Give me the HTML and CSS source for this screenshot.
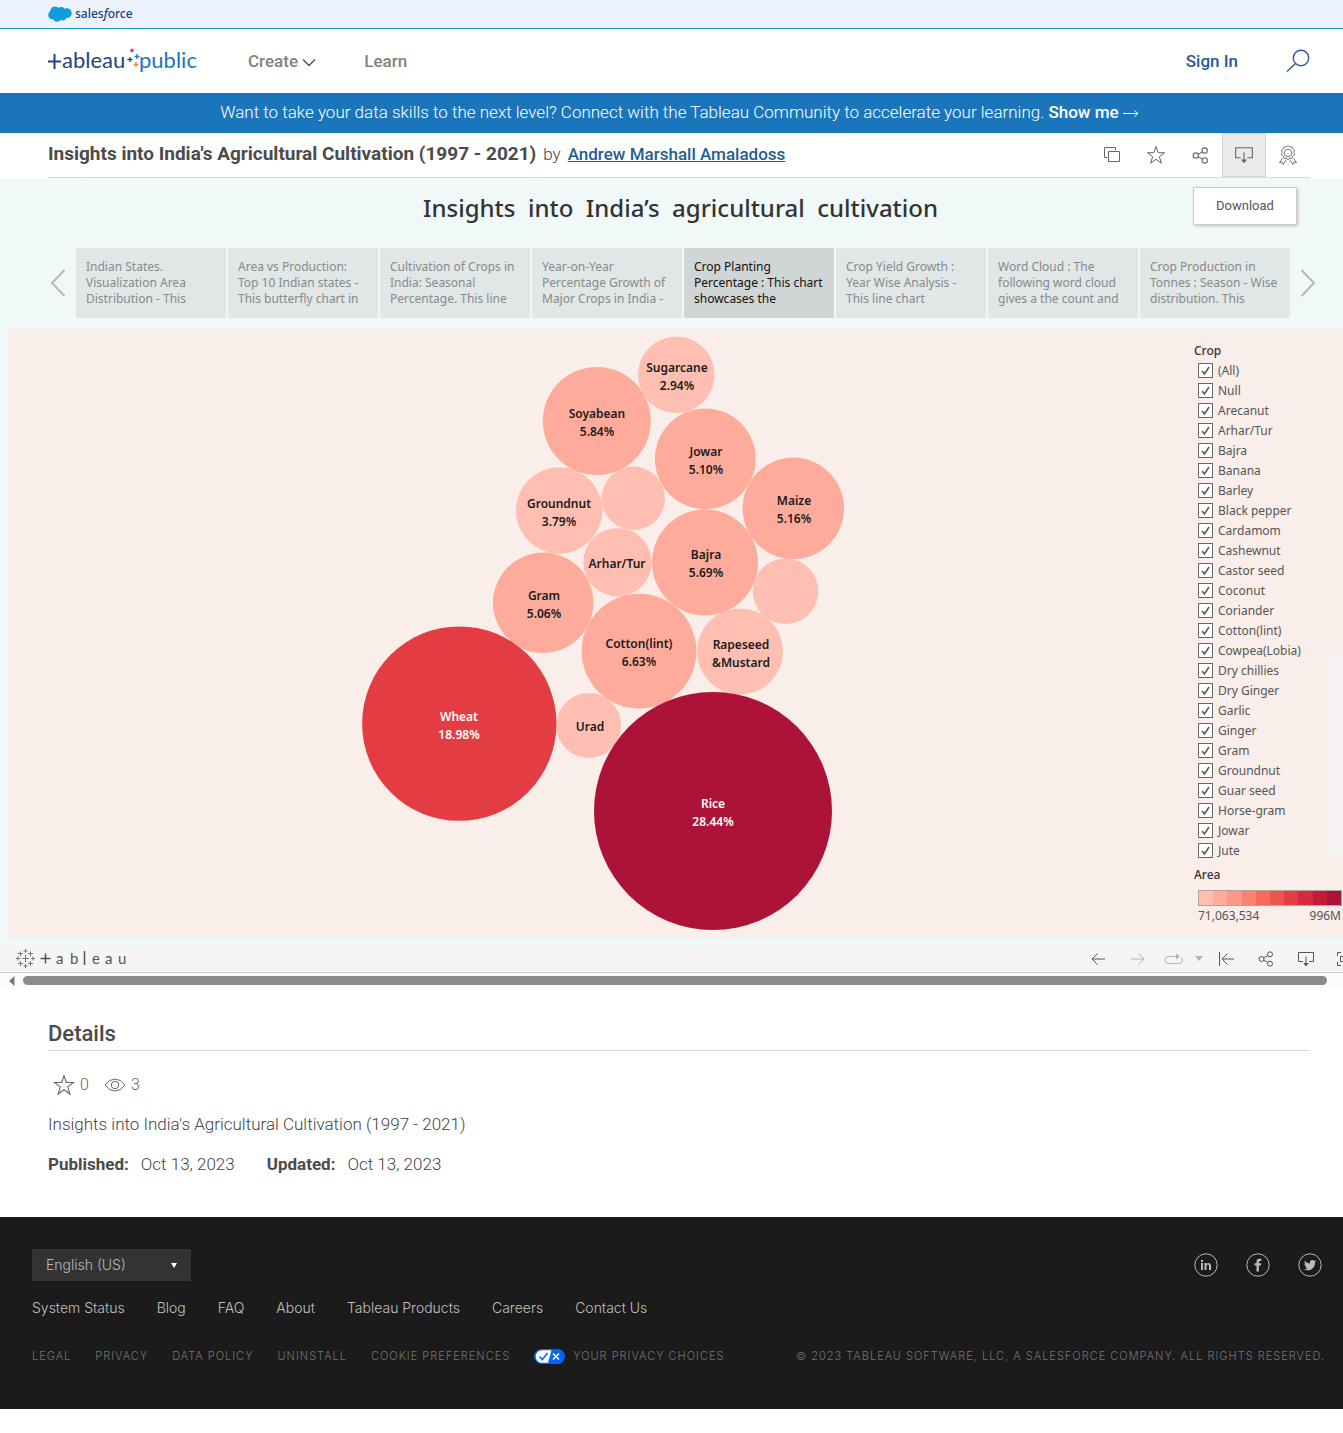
FILE: index.html
```html
<!DOCTYPE html>
<html lang="en">
<head>
<meta charset="utf-8">
<title>Insights into India's Agricultural Cultivation (1997 - 2021) | Tableau Public</title>
<meta name="viewport" content="width=device-width, initial-scale=1">
<link rel="stylesheet" href="styles.css">
</head>
<body>
<svg class="defs" aria-hidden="true">
  <symbol id="share" viewBox="0 0 16 16"><g fill="none" stroke="currentColor"><circle cx="3.500" cy="8" r="2.500"/><circle cx="12" cy="3.300" r="2.500"/><circle cx="12" cy="12.700" r="2.500"/><path d="M5.800 6.800l4-2.200M5.800 9.200l4 2.200"/></g></symbol>
  <symbol id="download" viewBox="0 0 18 16"><path d="M6 10.500H1.500V1.500h15v9H12M9 5.500v7" fill="none" stroke="currentColor"/><path d="M6.300 12h5.400L9 15.500z" fill="currentColor"/></symbol>
  <symbol id="star" viewBox="0 0 20 20"><path d="M10 1.500l2.100 6.200h6.500l-5.200 4 1.900 6.500-5.300-3.900-5.300 3.900 1.900-6.500-5.200-4h6.500z" fill="none" stroke="currentColor"/></symbol>
</svg>

<div class="topbar">
  <a class="salesforce" href="#" aria-label="Salesforce">
    <svg width="24" height="16" viewBox="0 0 24 16"><g fill="#0d9dda"><circle cx="7" cy="5.300" r="4.800"/><circle cx="13" cy="5" r="4.100"/><circle cx="18.800" cy="7.200" r="4.900"/><circle cx="4.400" cy="9" r="4.200"/><circle cx="9" cy="11.500" r="4.200"/><circle cx="14.500" cy="10.200" r="4.200"/></g></svg>
    <span>sales<i>f</i>orce</span>
  </a>
</div>

<header class="nav">
  <a class="logo" href="#" aria-label="Tableau Public">
    <svg width="150" height="30" viewBox="0 0 150 30">
      <path d="M0 15.500h13M6.500 8v15" stroke="#1f447e" stroke-width="2" fill="none"/>
      <text class="logo-text" x="14" y="22" fill="#1f447e">ableau</text>
      <path d="M79.500 13.500h5M82 11v5" stroke="#1f447e" stroke-width="1.300"/>
      <path d="M82 4.500h4M84 2.500v4" stroke="#c8304f" stroke-width="1.300"/>
      <path d="M86.500 10.500h5M89 8v5" stroke="#1b75bb" stroke-width="1.300"/>
      <path d="M85.500 18.500h5M88 16v5" stroke="#e8874c" stroke-width="1.300"/>
      <text class="logo-text" x="91" y="22" fill="#1b75bb">public</text>
    </svg>
  </a>
  <nav class="links">
    <a href="#">Create <svg width="14" height="9" viewBox="0 0 14 9"><path d="M1 1.500l6 6 6-6" fill="none" stroke="#555" stroke-width="1.400"/></svg></a>
    <a href="#">Learn</a>
  </nav>
  <a class="signin" href="#">Sign In</a>
  <button class="search" type="button" aria-label="Search"><svg width="24" height="24" viewBox="0 0 24 24"><g fill="none" stroke="#2b5aa0" stroke-width="1.400"><circle cx="15" cy="9" r="7.700"/><path d="M9.500 14.500L1 22.500"/></g></svg></button>
</header>

<div class="banner">Want to take your data skills to the next level? Connect with the Tableau Community to accelerate your learning. <a href="#">Show me <svg width="16" height="9" viewBox="0 0 16 9"><path d="M0 4.500h15M11.500 1.500l3.500 3-3.500 3" fill="none" stroke="#fff"/></svg></a></div>

<section class="heading">
  <h1>Insights into India's Agricultural Cultivation (1997 - 2021)</h1>
  <span class="by">by</span>
  <a class="author" href="#">Andrew Marshall Amaladoss</a>
  <div class="actions">
    <button type="button" aria-label="Make a copy"><svg width="18" height="18" viewBox="0 0 18 18"><path d="M4.500 11.500h-3v-10h11v3M5.500 5.500h11v10h-11z" fill="none" stroke="currentColor"/></svg></button>
    <button type="button" aria-label="Favorite"><svg width="20" height="20"><use href="#star"/></svg></button>
    <button type="button" aria-label="Share"><svg width="17" height="17"><use href="#share"/></svg></button>
    <div class="download">
      <button type="button" class="active" aria-label="Download options"><svg width="20" height="18"><use href="#download"/></svg></button>
      <button type="button" class="tip">Download</button>
    </div>
    <button type="button" aria-label="Nominate"><svg width="20" height="20" viewBox="0 0 20 20"><g fill="none" stroke="currentColor" stroke-width=".9"><circle cx="10" cy="8" r="3.800"/><path d="M10 .7l1.900 1.200 2.200.1.800 2 1.600 1.400-.5 2.300.6 2.100-1.800 1.400-.9 2-2.200.1-1.700 1.400-1.700-1.400-2.200-.1-.9-2-1.800-1.400.6-2.100-.5-2.300 1.600-1.400.8-2 2.200-.1zM4.800 12.800l-3.300 4.800 2.700-.3 1 2.300 2.900-5M15.200 12.800l3.300 4.800-2.700-.3-1 2.300-2.900-5"/></g></svg></button>
  </div>
</section>

<main class="viz">
  <div class="story">
    <h2>Insights  into  India’s  agricultural  cultivation</h2>
    <div class="points">
      <button class="arrow" type="button" aria-label="Previous"><svg width="16" height="28" viewBox="0 0 16 28"><path d="M14.500 1L2 14l12.500 13" fill="none" stroke="#b4b9b9" stroke-width="2"/></svg></button>
      <button class="point" type="button">Indian States. Visualization Area Distribution - This</button>
      <button class="point" type="button">Area vs Production: Top 10 Indian states - This butterfly chart in</button>
      <button class="point" type="button">Cultivation of Crops in India: Seasonal Percentage. This line</button>
      <button class="point" type="button">Year-on-Year<br>Percentage Growth of Major Crops in India -</button>
      <button class="point current" type="button">Crop Planting Percentage : This chart showcases the</button>
      <button class="point" type="button">Crop Yield Growth : Year Wise Analysis - This line chart</button>
      <button class="point" type="button">Word Cloud : The following word cloud gives a the count and</button>
      <button class="point" type="button">Crop Production in Tonnes : Season - Wise distribution. This</button>
      <button class="arrow" type="button" aria-label="Next"><svg width="16" height="28" viewBox="0 0 16 28"><path d="M1.500 1L14 14 1.500 27" fill="none" stroke="#b4b9b9" stroke-width="2"/></svg></button>
    </div>
    <div class="sheet">
      <svg class="chart" viewBox="8 329 1186 609" role="img" aria-label="Share of planted area by crop">
        <g fill="#ffbeb2">
          <circle cx="676.300" cy="374.800" r="38.300"/><circle cx="559.200" cy="510.500" r="43.300"/><circle cx="633.300" cy="498.300" r="31.700"/><circle cx="617.500" cy="562.200" r="34.200"/><circle cx="785.500" cy="591.200" r="32.800"/><circle cx="740" cy="651.500" r="43"/><circle cx="588.700" cy="725.500" r="32.400"/>
        </g>
        <g fill="#ffab9b">
          <circle cx="596.800" cy="421" r="54"/><circle cx="705.300" cy="458.800" r="50.400"/><circle cx="793.300" cy="508.300" r="50.700"/><circle cx="705" cy="562.500" r="53"/><circle cx="543.200" cy="602.800" r="50.200"/><circle cx="639" cy="651.200" r="57.400"/>
        </g>
        <circle cx="459.300" cy="723.600" r="97.200" fill="#e33d43"/>
        <circle cx="713" cy="811" r="119" fill="#ad1238"/>
        <g class="marks">
          <text x="677" y="372">Sugarcane</text><text x="677" y="390">2.94%</text>
          <text x="597" y="418">Soyabean</text><text x="597" y="436">5.84%</text>
          <text x="706" y="456">Jowar</text><text x="706" y="474">5.10%</text>
          <text x="794" y="505">Maize</text><text x="794" y="523">5.16%</text>
          <text x="559" y="508">Groundnut</text><text x="559" y="526">3.79%</text>
          <text x="617" y="568">Arhar/Tur</text>
          <text x="706" y="559">Bajra</text><text x="706" y="577">5.69%</text>
          <text x="544" y="600">Gram</text><text x="544" y="618">5.06%</text>
          <text x="639" y="648">Cotton(lint)</text><text x="639" y="666">6.63%</text>
          <text x="741" y="649">Rapeseed</text><text x="741" y="667">&amp;Mustard</text>
          <text x="590" y="731">Urad</text>
          <g fill="#fff"><text x="459" y="721">Wheat</text><text x="459" y="739">18.98%</text>
          <text x="713" y="808">Rice</text><text x="713" y="826">28.44%</text></g>
        </g>
      </svg>
      <aside class="side">
        <div class="filter">
          <fieldset>
            <legend>Crop</legend>
            <label><input type="checkbox" checked>(All)</label>
            <label><input type="checkbox" checked>Null</label>
            <label><input type="checkbox" checked>Arecanut</label>
            <label><input type="checkbox" checked>Arhar/Tur</label>
            <label><input type="checkbox" checked>Bajra</label>
            <label><input type="checkbox" checked>Banana</label>
            <label><input type="checkbox" checked>Barley</label>
            <label><input type="checkbox" checked>Black pepper</label>
            <label><input type="checkbox" checked>Cardamom</label>
            <label><input type="checkbox" checked>Cashewnut</label>
            <label><input type="checkbox" checked>Castor seed</label>
            <label><input type="checkbox" checked>Coconut</label>
            <label><input type="checkbox" checked>Coriander</label>
            <label><input type="checkbox" checked>Cotton(lint)</label>
            <label><input type="checkbox" checked>Cowpea(Lobia)</label>
            <label><input type="checkbox" checked>Dry chillies</label>
            <label><input type="checkbox" checked>Dry Ginger</label>
            <label><input type="checkbox" checked>Garlic</label>
            <label><input type="checkbox" checked>Ginger</label>
            <label><input type="checkbox" checked>Gram</label>
            <label><input type="checkbox" checked>Groundnut</label>
            <label><input type="checkbox" checked>Guar seed</label>
            <label><input type="checkbox" checked>Horse-gram</label>
            <label><input type="checkbox" checked>Jowar</label>
            <label><input type="checkbox" checked>Jute</label>
          </fieldset>
          <div class="track"></div>
        </div>
        <h3>Area</h3>
        <div class="ramp"></div>
        <div class="range"><span>71,063,534</span><span>996M</span></div>
      </aside>
    </div>
  </div>
  <div class="toolbar">
    <a class="mark" href="#" aria-label="Tableau">
      <svg width="116" height="20" viewBox="0 0 116 20">
        <path d="M9.500 6v7M6 9.500h7M9.500 0v4M7.500 2h4M9.500 15v4M7.500 17h4M2 7.500v4M0 9.500h4M17 7.500v4M15 9.500h4M4.500 2.500v5M2 4.500h5M14.500 2.500v5M12 4.500h5M4.500 12v5M2 14.500h5M14.500 12v5M12 14.500h5" fill="none" stroke="#777"/>
        <path d="M24.500 9.500h10M29.500 4.500v10M68.500 2v14" fill="none" stroke="#555" stroke-width="1.500"/>
        <text class="mark-text" x="40 54 76 89 102" y="15">abeau</text>
      </svg>
    </a>
    <div class="tools">
      <button class="w40" type="button" aria-label="Undo"><svg width="14" height="12" viewBox="0 0 14 12"><path d="M14 6H1M6.500 .5L1 6l5.500 5.500" fill="none" stroke="currentColor"/></svg></button>
      <button class="w40 off" type="button" aria-label="Redo"><svg width="14" height="12" viewBox="0 0 14 12"><path d="M0 6h13M7.500 .5L13 6l-5.500 5.500" fill="none" stroke="currentColor"/></svg></button>
      <button class="w32 off" type="button" aria-label="Replay"><svg width="20" height="12" viewBox="0 0 20 12"><path d="M13 3.500H4.500a3.500 3.500 0 0 0 0 7h10.500a3.500 3.500 0 0 0 2-6.300" fill="none" stroke="currentColor"/><path d="M12 .5l4 3-4 3z" fill="currentColor"/></svg></button>
      <button class="w18 off" type="button" aria-label="Replay speed"><svg width="8" height="6" viewBox="0 0 8 6"><path d="M0 0h8L4 5z" fill="currentColor"/></svg></button>
      <button class="w36" type="button" aria-label="Revert"><svg width="16" height="16" viewBox="0 0 16 16"><path d="M1.500 1v14M16 8H4M9.500 2.500L4 8l5.500 5.500" fill="none" stroke="currentColor"/></svg></button>
      <button class="w44" type="button" aria-label="Share view"><svg width="16" height="16"><use href="#share"/></svg></button>
      <button class="w36" type="button" aria-label="Download view"><svg width="18" height="16"><use href="#download"/></svg></button>
      <button class="w40" type="button" aria-label="Full screen"><svg width="14" height="14" viewBox="0 0 14 14"><path d="M4 .5H.5V4M.5 10v3.500H4M10 .5h3.500V4M13.500 10v3.500H10M3.500 4.500h7v5h-7z" fill="none" stroke="currentColor"/></svg></button>
    </div>
  </div>
  <div class="scroll"><svg width="6" height="10" viewBox="0 0 6 10"><path d="M5.500 0v10L0 5z" fill="#777"/></svg><div class="thumb"></div></div>
</main>

<section class="details">
  <h2>Details</h2>
  <div class="stats">
    <span><svg width="22" height="22"><use href="#star"/></svg>0</span>
    <span><svg width="22" height="14" viewBox="0 0 22 14"><g fill="none" stroke="currentColor"><path d="M1 7q4.500-6 10-6t10 6q-4.500 6-10 6T1 7z"/><circle cx="11" cy="7" r="3.700"/></g></svg>3</span>
  </div>
  <p>Insights into India's Agricultural Cultivation (1997 - 2021)</p>
  <dl>
    <div><dt>Published:</dt><dd>Oct 13, 2023</dd></div>
    <div><dt>Updated:</dt><dd>Oct 13, 2023</dd></div>
  </dl>
</section>

<footer class="footer">
  <div class="row">
    <div class="language">
      <select aria-label="Language"><option>English (US)</option></select>
    </div>
    <div class="social">
      <a href="#" aria-label="LinkedIn"><svg width="24" height="24" viewBox="0 0 24 24"><circle cx="12" cy="12" r="11.200" fill="none" stroke="#b8b8b8"/><path d="M7 10h2v7H7zM7 7h2v2H7zM10.500 10h2v1q2-2 4 0 .5.800.5 2v4h-2v-4q0-1.500-1.200-1.500T12.500 13v4h-2z" fill="#bbb"/></svg></a>
      <a href="#" aria-label="Facebook"><svg width="24" height="24" viewBox="0 0 24 24"><circle cx="12" cy="12" r="11.200" fill="none" stroke="#b8b8b8"/><path d="M10.500 18.500v-6H8.500v-2.300h2V8.700q0-2.900 2.800-2.900h1.900v2.200h-1.300q-1 0-1 1v1.200h2.300l-.3 2.300h-2v6z" fill="#bbb"/></svg></a>
      <a href="#" aria-label="Twitter"><svg width="24" height="24" viewBox="0 0 24 24"><circle cx="12" cy="12" r="11.200" fill="none" stroke="#b8b8b8"/><path d="M18.300 8.200l-1.300 1.300c.1 4.500-3 7.800-7 7.800-1.600 0-3-.4-4-1.100 1.400.1 2.600-.2 3.600-1-1.100-.1-1.900-.8-2.200-1.700h1c-1.200-.4-1.900-1.300-1.900-2.500l1 .3C6.400 10.400 6.200 9 6.900 8c1.300 1.500 3 2.400 5 2.500-.4-2 .8-3.500 2.500-3.500.8 0 1.400.3 1.900.8l1.500-.6-1 1.300z" fill="#bbb"/></svg></a>
    </div>
  </div>
  <nav class="primary">
    <a href="#">System Status</a><a href="#">Blog</a><a href="#">FAQ</a><a href="#">About</a><a href="#">Tableau Products</a><a href="#">Careers</a><a href="#">Contact Us</a>
  </nav>
  <div class="row legal">
    <nav>
      <a href="#">LEGAL</a><a href="#">PRIVACY</a><a href="#">DATA POLICY</a><a href="#">UNINSTALL</a><a href="#">COOKIE PREFERENCES</a>
      <a href="#"><svg width="31" height="15" viewBox="0 0 31 15"><rect width="31" height="15" rx="7.500" fill="#06f"/><path d="M8 1.200h9.500L14 13.800H8A6.300 6.300 0 0 1 8 1.200z" fill="#fff"/><path d="M5.500 7.500l3 3 5-6.500" fill="none" stroke="#06f" stroke-width="1.600"/><path d="M19 4.500l6 6M25 4.500l-6 6" stroke="#fff" stroke-width="1.600"/></svg>YOUR PRIVACY CHOICES</a>
    </nav>
    <span>© 2023 TABLEAU SOFTWARE, LLC, A SALESFORCE COMPANY. ALL RIGHTS RESERVED.</span>
  </div>
</footer>
</body>
</html>
```
FILE: styles.css
```css
* { box-sizing: border-box; }
body, h1, h2, h3, p, dl, dd, fieldset { margin: 0; }
body { background: #fff; color: #444; font: 300 17px/24px Roboto, "Liberation Sans", sans-serif; }
a { color: inherit; text-decoration: none; }
button { border: 0; margin: 0; padding: 0; background: none; color: inherit; font: inherit; cursor: pointer; }
svg { flex: none; }
.defs { display: none; }

/* Site header */
.topbar { height: 29px; padding: 0 48px; background: #ecf3fe; border-bottom: 1px solid #1d9bd8; }
.salesforce { display: flex; align-items: center; gap: 3px; height: 27px; color: #17407d; font: 500 12px/27px "Noto Sans", sans-serif; }
.nav { display: flex; align-items: center; height: 64px; padding: 0 33px 0 48px; }
.logo { display: flex; margin-right: 50px; }
.logo-text { font: 400 22px Lato, sans-serif; }
.links { display: flex; gap: 48px; flex: 1; color: #828282; font-weight: 500; }
.signin { color: #2b5797; font-weight: 500; margin-right: 48px; }
.search { display: flex; }
.banner { padding: 7px 16px 9px 32px; background: #1b75bb; color: #fff; text-align: center; }
.banner a { font-weight: 500; }

/* Workbook heading */
.heading { display: flex; align-items: center; height: 45px; margin: 0 33px 0 48px; border-bottom: 1px solid #d8dcdc; }
.heading h1 { font-size: 19px; font-weight: 700; color: #4b4b4b; padding-bottom: 2px; }
.by { margin: 0 7px; padding-bottom: 2px; }
.author { padding-bottom: 2px; color: #1f5d93; font-weight: 500; text-decoration: underline; }
.actions { display: flex; margin-left: auto; color: #666; }
.actions button { display: flex; align-items: center; justify-content: center; width: 44px; height: 44px; }
.download { position: relative; }
.actions .active { background: #eaeaea; border: 1px solid #d8d8d8; }
.actions .tip { position: absolute; z-index: 1; top: 54px; right: -31px; width: 104px; height: 38px; background: #fff; border: 1px solid #ccc; box-shadow: 1px 1px 3px #0003; font-size: 13px; font-weight: 400; color: #555; }

/* Embedded story */
.viz { overflow: hidden; background: #f0f9f8; font-family: "Noto Sans", sans-serif; font-weight: 400; }
.story { width: calc(100% + 23px); padding: 0 8px 8px; }
.story h2 { padding: 15px 5px 25px 0; color: #333; font-size: 24px; line-height: 30px; font-weight: 500; text-align: center; white-space: pre; }
.points { display: flex; gap: 2px; height: 70px; margin-bottom: 11px; }
.arrow { display: flex; align-items: center; justify-content: flex-end; width: 66px; padding: 0 8px; }
.arrow:last-child { justify-content: flex-start; }
.point { flex: 1; padding: 11px 9px 11px 10px; background: #e1e6e6; color: #858a8a; font-size: 12px; line-height: 16px; text-align: left; }
.point.current { background: #d0d5d5; color: #111; }
.sheet { display: flex; background: #f9eee9; }
.chart { display: block; flex: 1; min-width: 0; height: 609px; }
.marks { fill: #1b1b1b; font: 600 12px "Noto Sans", sans-serif; text-anchor: middle; }
.side { width: 164px; padding-top: 12px; color: #555; font-size: 12px; line-height: 20px; }
.filter { display: flex; justify-content: space-between; align-items: flex-end; }
.filter fieldset { border: 0; padding: 0; }
.filter legend, .side h3 { padding: 0; color: #333; font-size: 12px; font-weight: 500; line-height: 20px; }
.filter label { display: flex; align-items: flex-start; gap: 5px; padding-left: 4px; }
.filter input { appearance: none; width: 15px; height: 15px; margin: 2px 0 0; border: 1px solid #666; background: #fff url("data:image/svg+xml,%3Csvg xmlns='http://www.w3.org/2000/svg' viewBox='0 0 13 13'%3E%3Cpath d='M3 7l2.500 3L10 3' fill='none' stroke='%23555' stroke-width='1.500'/%3E%3C/svg%3E"); }
.track { width: 28px; height: 204px; margin-bottom: 3px; background: #f4f4f4; }
.side h3 { padding-top: 4px; }
.ramp { width: 144px; height: 16px; margin: 5px 0 0 4px; border: 1px solid #b0a59a; background: linear-gradient(90deg, #ffbeb2 10%, #ffab9b 0 20%, #fe9784 0 30%, #fb826c 0 40%, #f66c59 0 50%, #ef564b 0 60%, #e33d43 0 70%, #d72a3e 0 80%, #c51b3a 0 90%, #ad1238 0); }
.range { display: flex; justify-content: space-between; width: 143px; margin-left: 4px; }
.toolbar { display: flex; justify-content: space-between; align-items: center; width: calc(100% + 23px); height: 27px; padding: 0 2px 0 16px; background: #f5f5f5; border-bottom: 1px solid #cfcfcf; }
.mark { display: flex; }
.mark-text { fill: #555; font: 400 15px Lato, sans-serif; }
.tools { display: flex; color: #555; }
.tools button { display: flex; align-items: center; justify-content: center; height: 26px; }
.tools .off { color: #b4b4b4; }
.w18 { width: 18px; }
.w32 { width: 32px; }
.w36 { width: 36px; }
.w40 { width: 40px; }
.w44 { width: 44px; }
.scroll { display: flex; align-items: center; gap: 8px; height: 15px; padding: 0 16px 0 9px; background: #fcfcfc; }
.thumb { flex: 1; height: 9px; border-radius: 5px; background: #8b8b8b; }

/* Workbook details */
.details { padding: 32px 33px 41px 48px; }
.details h2 { padding-bottom: 2px; border-bottom: 1px solid #d8d8d8; color: #4b4b4b; font-size: 22px; line-height: 28px; font-weight: 500; }
.stats { display: flex; gap: 15px; height: 24px; margin: 22px 0 15px; padding-left: 5px; color: #666; font-size: 16px; }
.stats span { display: flex; align-items: center; gap: 5px; }
.details dl { display: flex; gap: 32px; margin-top: 16px; }
.details dl div { display: flex; gap: 12px; }
.details dt { color: #4b4b4b; font-weight: 700; }

/* Footer */
.footer { height: 192px; padding: 32px 18px 0 32px; background: #1b1b1b; color: #c0c0c0; font: 300 14px/24px Inter, sans-serif; }
.row { display: flex; justify-content: space-between; align-items: center; }
.language { display: flex; position: relative; }
.language::after { content: ""; position: absolute; right: 14px; top: 14px; border: 3px solid transparent; border-top: 5px solid #fff; border-bottom: 0; pointer-events: none; }
.language select { appearance: none; width: 159px; height: 32px; padding: 0 14px; border: 0; border-radius: 0; background: #333; color: #b8b8b8; font: inherit; }
.social { display: flex; gap: 28px; padding-right: 3px; }
.social a { display: flex; }
.primary { display: flex; gap: 32px; margin: 15px 0 24px; }
.legal { color: #757575; font-size: 11px; letter-spacing: 1px; }
.legal nav { display: flex; gap: 24px; }
.legal nav a { display: flex; align-items: center; gap: 8px; }
```
